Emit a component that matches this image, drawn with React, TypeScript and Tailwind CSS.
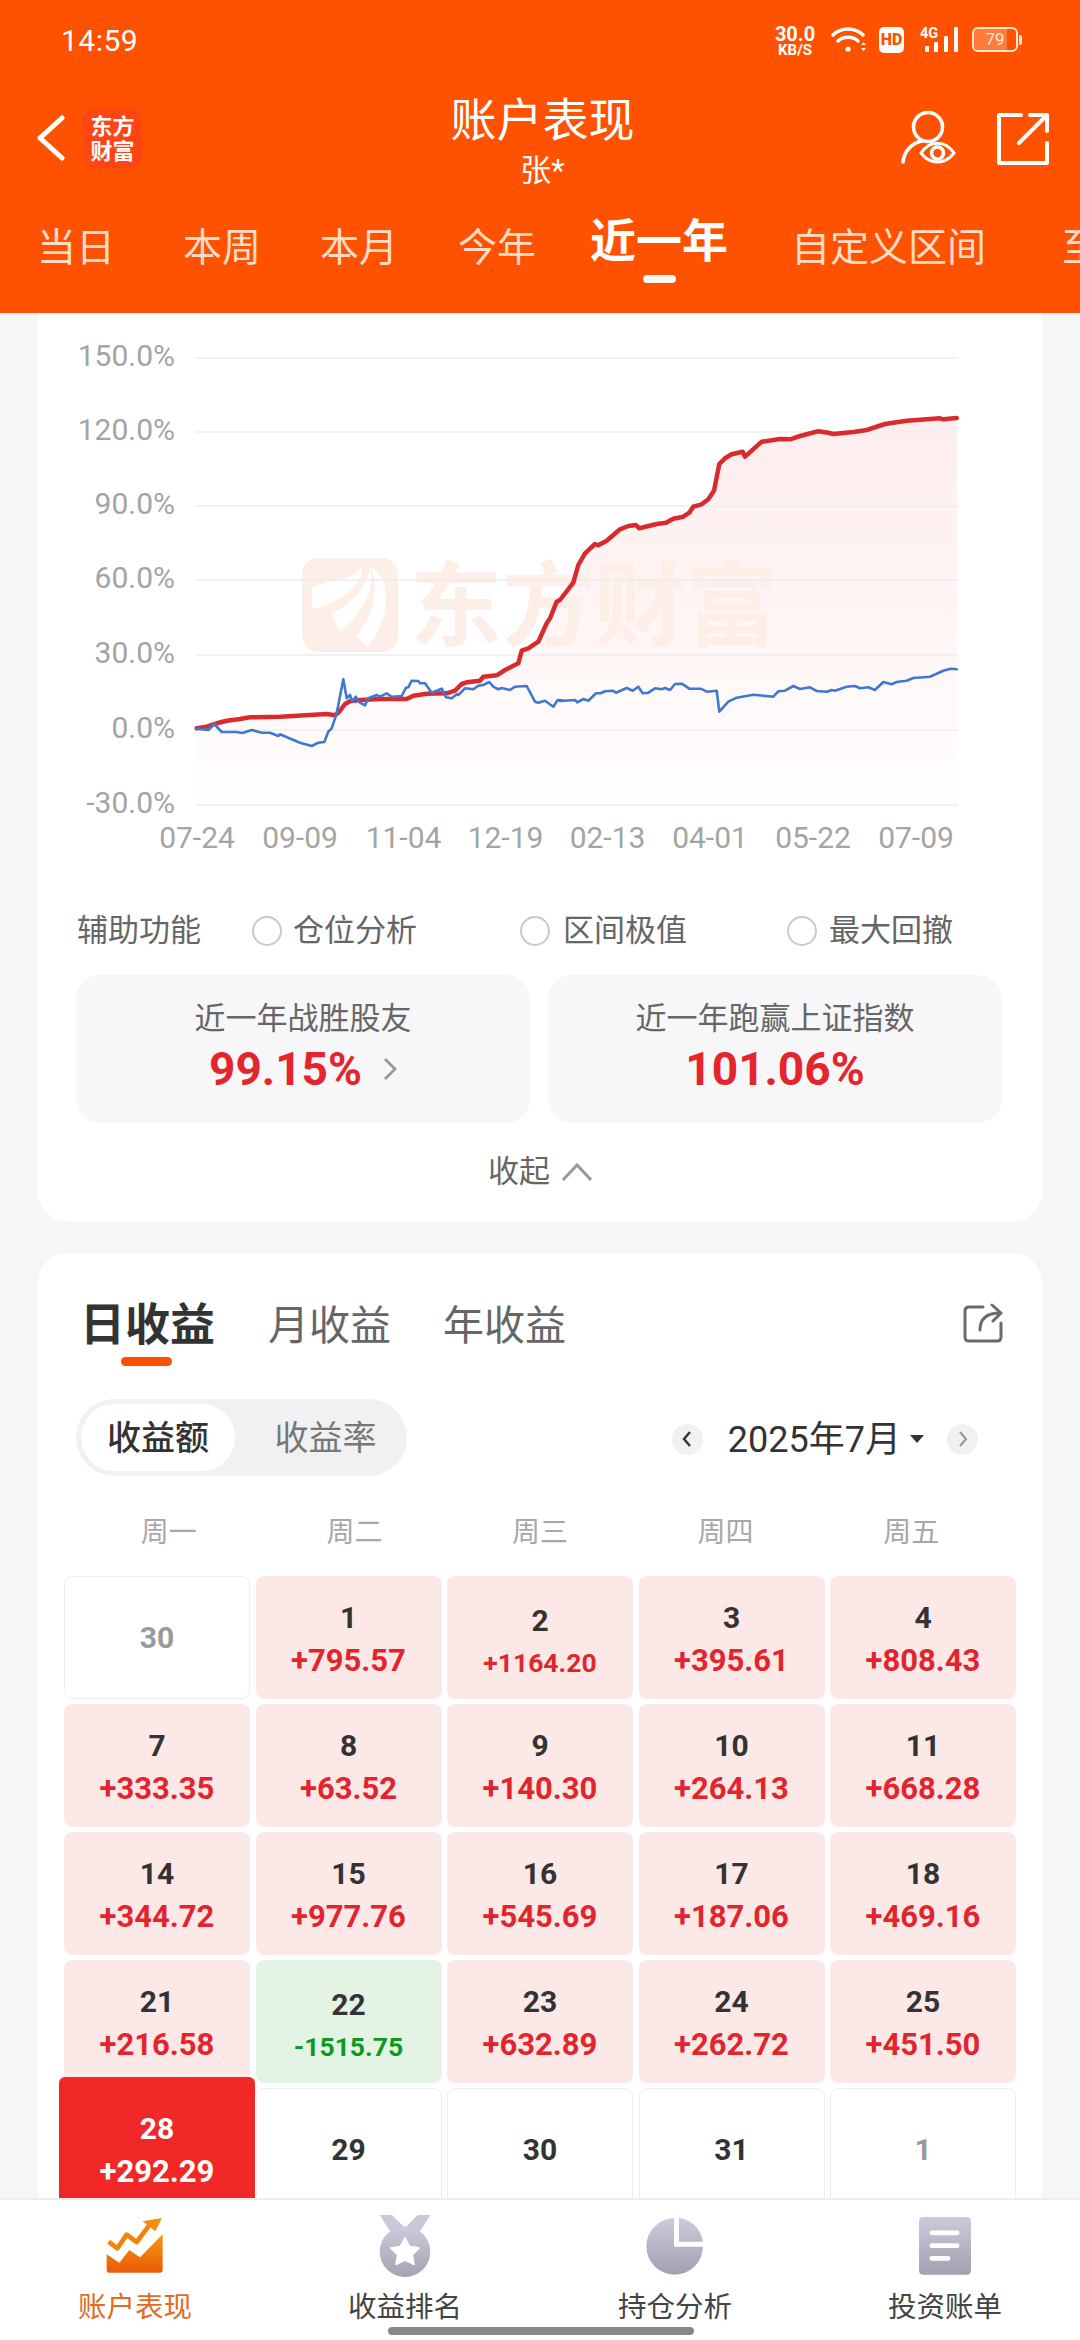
import React from "react";

const z6 = (p: number[][]) => p.map(([x, y]) => [180 + x / 3, 400 + y / 3]);
const z7 = (p: number[][]) => p.map(([x, y]) => [560 + x / 3, 400 + y / 3]);

const redPts = [
  ...z6([[50,985],[80,980],[110,970],[140,962],[180,957],[210,952],[300,950],[440,942],[465,946],[478,935],[495,912],[510,904],[540,900],[600,897],[680,897],[700,887],[740,881],[800,880],[825,872],[845,852],[860,847],[900,842],[910,830],[950,826],[975,810],[1015,790],[1025,752],[1045,745],[1075,725],[1100,670],[1110,655],[1130,605]]),
  ...z7([[0,600],[40,548],[55,495],[75,460],[105,432],[115,436],[140,422],[180,388],[205,378],[228,375],[238,385],[290,372],[318,368],[340,356],[370,350],[388,338],[400,320],[425,313],[445,298],[462,272],[478,192],[495,175],[515,163],[548,155],[555,170],[605,125],[660,117],[690,118],[720,108],[775,94],[805,98],[820,102],[880,96],[920,90],[975,72],[1040,62],[1140,55],[1150,58],[1190,54]]),
];
const bluePts = [
  ...z6([[50,986],[85,990],[103,972],[125,996],[170,996],[187,999],[215,990],[245,998],[270,998],[295,1008],[300,1003],[335,1018],[360,1028],[395,1038],[415,1028],[433,1026],[445,995],[455,985],[470,940],[490,838],[500,895],[510,885],[517,905],[527,890],[540,908],[555,916],[565,895],[590,885],[600,890],[620,880],[635,890],[665,888],[678,863],[685,862],[695,842],[715,843],[720,850],[735,850],[755,878],[785,866],[798,892],[815,895],[830,883],[835,885],[855,865],[880,868],[895,857],[910,855],[928,846],[940,860],[955,868],[965,864],[990,870],[1005,860],[1040,858],[1065,905],[1075,908],[1095,902],[1120,920],[1133,900],[1155,902]]),
  ...z7([[0,903],[45,900],[52,907],[70,897],[85,902],[108,880],[122,880],[135,874],[160,872],[168,878],[200,864],[218,872],[235,860],[248,880],[265,878],[285,865],[305,868],[315,864],[330,870],[345,852],[365,851],[388,866],[422,866],[440,875],[470,872],[478,935],[505,905],[530,893],[580,884],[640,890],[655,874],[675,872],[700,858],[720,867],[750,862],[770,873],[800,875],[815,870],[825,872],[860,860],[885,858],[900,865],[925,862],[945,870],[970,846],[995,853],[1010,846],[1040,842],[1060,834],[1110,830],[1150,812],[1172,806],[1190,808]]),
];
const toD = (p: number[][]) => "M" + p.map(([x, y]) => `${x.toFixed(1)} ${y.toFixed(1)}`).join("L");
const redD = toD(redPts);
const blueD = toD(bluePts);
const areaD = redD + "L957 805L196 805Z";

const yLabels = [
  ["150.0%", 358], ["120.0%", 432], ["90.0%", 506], ["60.0%", 580], ["30.0%", 655], ["0.0%", 730], ["-30.0%", 805],
] as [string, number][];
const xLabels = [
  ["07-24", 197], ["09-09", 300], ["11-04", 403.5], ["12-19", 505.5], ["02-13", 607.5], ["04-01", 710], ["05-22", 813], ["07-09", 916],
] as [string, number][];

function Chart() {
  return (
    <svg width="1004" height="547" viewBox="38 313 1004 547" className="block">
      <defs>
        <linearGradient id="area" gradientUnits="userSpaceOnUse" x1="0" y1="410" x2="0" y2="805">
          <stop offset="0" stopColor="#feeded" />
          <stop offset="0.5" stopColor="#fff5f4" />
          <stop offset="0.85" stopColor="#fffbfb" />
          <stop offset="1" stopColor="#fffefe" />
        </linearGradient>
      </defs>
      <path d={areaD} fill="url(#area)" />
      <rect x="302" y="558" width="96" height="94" rx="16" fill="#fdeee8" />
      <path d="M312 588C330 578 352 582 362 567C364 585 340 603 312 609Z" fill="#fff" />
      <path d="M332 613C348 605 366 592 370 567C376 590 362 614 339 632Z" fill="#fff" />
      <path d="M356 636C370 622 380 595 371 567C392 580 392 615 368 647Z" fill="#fff" />
      <text x="410" y="639" fontSize="92" fontWeight="700" fill="#fdeee8">东方财富</text>
      {yLabels.map(([t, y]) => (
        <g key={t}>
          <line x1="196" x2="958" y1={y} y2={y} stroke="#ecedf1" strokeWidth="1.5" />
          <text x="175" y={y + 8} textAnchor="end" fontSize="30" fill="#a4a4a4">{t}</text>
        </g>
      ))}
      {xLabels.map(([t, x]) => (
        <text key={t} x={x} y="848" textAnchor="middle" fontSize="30" fill="#a4a4a4">{t}</text>
      ))}
      <path d={redD} fill="none" stroke="#d92b2e" strokeWidth="4.5" strokeLinejoin="round" strokeLinecap="round" />
      <path d={blueD} fill="none" stroke="#3f79cf" strokeWidth="2.6" strokeLinejoin="round" strokeLinecap="round" />
    </svg>
  );
}

function StatusBar() {
  return (
    <div className="flex h-[80px] items-start justify-between text-white">
      <div className="ml-[61px] mt-[21px] text-[30px] leading-[40px] tracking-[0.5px]">14:59</div>
      <div className="mr-[58px] mt-[27px] flex items-start">
        <div className="flex w-[44px] flex-col items-center">
          <div className="text-[20px] font-bold leading-[15px]">30.0</div>
          <div className="mt-[3px] text-[15px] font-bold leading-[11px]">KB/S</div>
        </div>
        <svg width="36" height="26" viewBox="0 0 36 26" className="ml-[14px]" fill="none" stroke="#fff" strokeLinecap="round">
          <path d="M2 8C10 0 24 0 32 8" strokeWidth="3.4" />
          <path d="M7 14C12 9 22 9 27 14" strokeWidth="3.4" />
          <circle cx="17" cy="22" r="2.6" fill="#fff" stroke="none" />
          <path d="M30 18l2.5-3 2.5 3zM30 21l2.5 3 2.5-3z" fill="#fff" stroke="none" />
        </svg>
        <div className="ml-[12px] flex h-[26px] w-[25px] items-center justify-center rounded-[5px] bg-white text-[16px] font-black leading-none text-[#ff5000]">HD</div>
        <svg width="38" height="26" viewBox="0 0 38 26" className="ml-[16px]" fill="#fff">
          <rect x="5" y="19" width="4" height="6" rx="1" />
          <rect x="14" y="15" width="4" height="10" rx="1" />
          <rect x="24" y="9" width="4" height="16" rx="1" />
          <rect x="34" y="0" width="4" height="25" rx="1" />
        </svg>
        <div className="ml-[-38px] h-[14px] w-[20px] text-[14.5px] font-bold leading-[14px]">4G</div>
        <div className="ml-[32px] flex items-center">
          <div className="relative flex h-[25px] w-[46px] items-center justify-center overflow-hidden rounded-[6px] border-2 border-[#ffe6d6] text-[17px] leading-none text-[#ffe6d6]">
            <div className="absolute inset-y-0 left-0 w-[78%] bg-[#ff7a3d]" />
            <span className="relative">79</span>
          </div>
          <div className="ml-[1px] h-[10px] w-[3px] rounded-r-[2px] bg-[#ffe6d6]" />
        </div>
      </div>
    </div>
  );
}

function TitleBar() {
  return (
    <div className="mt-[14px] grid grid-cols-[1fr_auto_1fr] items-start text-white">
      <div className="flex items-start">
        <svg width="32" height="48" viewBox="0 0 32 48" className="ml-[35px] mt-[21px]" fill="none" stroke="#fff" strokeWidth="5" strokeLinecap="round" strokeLinejoin="round">
          <path d="M27 3L5 23L27 43" />
        </svg>
        <div className="ml-[16px] mt-[14px] flex h-[60px] w-[59px] items-center justify-center rounded-[13px] bg-[#ff4514] pt-[2px] text-center text-[22px] font-bold leading-[25px]">
          东方<br />财富
        </div>
      </div>
      <div className="flex flex-col items-center pl-[5px]">
        <div className="mt-[1px] text-[46px] leading-[50px]">账户表现</div>
        <div className="mt-[8px] text-[31px] leading-[36px]">张*</div>
      </div>
      <div className="flex items-start justify-end">
        <svg width="60" height="56" viewBox="0 0 60 56" className="mt-[16px]" fill="none" stroke="#fff" strokeWidth="3.6" strokeLinecap="round">
          <circle cx="28" cy="17" r="14.5" />
          <path d="M3 52C4 42 11 33 22 31" />
          <path d="M21 43C30 30 45 30 54 43C45 55 30 55 21 43Z" strokeWidth="3" />
          <circle cx="37.5" cy="43" r="6" strokeWidth="3.6" />
        </svg>
        <svg width="54" height="54" viewBox="0 0 54 54" className="ml-[36px] mr-[30px] mt-[18px]" fill="none" stroke="#fff" strokeWidth="4" strokeLinecap="round" strokeLinejoin="round">
          <path d="M25 3H3V51H51V31" />
          <path d="M23 31L51 3M34 3H51V19" />
        </svg>
      </div>
    </div>
  );
}

function Tabs() {
  return (
    <div className="mt-[25px] flex items-start overflow-hidden whitespace-nowrap pl-[37px] pt-[4px] text-[39px] leading-[46px] text-[#ffdcc8]">
      <div className="mt-[7px] shrink-0">当日</div>
      <div className="ml-[68px] mt-[7px] shrink-0">本周</div>
      <div className="ml-[59px] mt-[7px] shrink-0">本月</div>
      <div className="ml-[60px] mt-[7px] shrink-0">今年</div>
      <div className="ml-[54px] flex shrink-0 flex-col items-center">
        <div className="text-[46px] font-bold leading-[46px] text-white">近一年</div>
        <div className="mt-[11px] h-[8px] w-[33px] rounded-full bg-[#fff6ef]" />
      </div>
      <div className="ml-[63px] mt-[7px] shrink-0">自定义区间</div>
      <div className="ml-[76px] mt-[7px] shrink-0">至今</div>
    </div>
  );
}

function Radio({ label, className, gap }: { label: string; className: string; gap: string }) {
  return (
    <div className={`flex items-center ${className}`}>
      <div className="h-[30px] w-[30px] rounded-full border-2 border-[#c9c9c9] bg-white" />
      <div className={`${gap} text-[#666666]`}>{label}</div>
    </div>
  );
}

function ChevronRight() {
  return (
    <svg width="14" height="22" viewBox="0 0 14 22" fill="none" stroke="#999" strokeWidth="2.8">
      <path d="M2 1L12 11L2 21" />
    </svg>
  );
}

function CardOne() {
  return (
    <section className="rounded-b-[30px] bg-white pb-[30px]">
      <Chart />
      <div className="mt-[50px] flex h-[40px] items-center pl-[39px] pt-[2px] text-[31px] leading-[40px]">
        <div className="w-[124px] text-[#666666]">辅助功能</div>
        <Radio label="仓位分析" className="ml-[51px]" gap="ml-[11px]" />
        <Radio label="区间极值" className="ml-[103px]" gap="ml-[13px]" />
        <Radio label="最大回撤" className="ml-[100px]" gap="ml-[12px]" />
      </div>
      <div className="ml-[38px] mt-[25px] flex w-[926px] gap-[18px]">
        <div className="flex h-[148px] w-[454px] flex-col items-center rounded-[24px] bg-[#f7f7f9] pt-[24px]">
          <div className="text-[31px] leading-[40px] text-[#666666]">近一年战胜股友</div>
          <div className="mt-[5px] flex items-center">
            <div className="text-[46px] font-bold leading-[50px] text-[#e4252c]">99.15%</div>
            <div className="ml-[21px]"><ChevronRight /></div>
          </div>
        </div>
        <div className="flex h-[148px] w-[454px] flex-col items-center rounded-[24px] bg-[#f7f7f9] pt-[24px]">
          <div className="text-[31px] leading-[40px] text-[#666666]">近一年跑赢上证指数</div>
          <div className="mt-[5px] text-[46px] font-bold leading-[50px] text-[#e4252c]">101.06%</div>
        </div>
      </div>
      <div className="mt-[29px] flex h-[40px] items-center justify-center">
        <div className="text-[31px] leading-[40px] text-[#666666]">收起</div>
        <svg width="30" height="18" viewBox="0 0 30 18" className="ml-[12px]" fill="none" stroke="#999" strokeWidth="3">
          <path d="M1 17L15 2L29 17" />
        </svg>
      </div>
    </section>
  );
}

type Cell = { d: string; v?: string; tone: "up" | "down" | "plain" | "muted"; small?: boolean; active?: boolean };

const cells: Cell[] = [
  { d: "30", tone: "muted" },
  { d: "1", v: "+795.57", tone: "up" },
  { d: "2", v: "+1164.20", tone: "up", small: true },
  { d: "3", v: "+395.61", tone: "up" },
  { d: "4", v: "+808.43", tone: "up" },
  { d: "7", v: "+333.35", tone: "up" },
  { d: "8", v: "+63.52", tone: "up" },
  { d: "9", v: "+140.30", tone: "up" },
  { d: "10", v: "+264.13", tone: "up" },
  { d: "11", v: "+668.28", tone: "up" },
  { d: "14", v: "+344.72", tone: "up" },
  { d: "15", v: "+977.76", tone: "up" },
  { d: "16", v: "+545.69", tone: "up" },
  { d: "17", v: "+187.06", tone: "up" },
  { d: "18", v: "+469.16", tone: "up" },
  { d: "21", v: "+216.58", tone: "up" },
  { d: "22", v: "-1515.75", tone: "down", small: true },
  { d: "23", v: "+632.89", tone: "up" },
  { d: "24", v: "+262.72", tone: "up" },
  { d: "25", v: "+451.50", tone: "up" },
  { d: "28", v: "+292.29", tone: "up", active: true },
  { d: "29", tone: "plain" },
  { d: "30", tone: "plain" },
  { d: "31", tone: "plain" },
  { d: "1", tone: "muted" },
];

function DayCell({ c }: { c: Cell }) {
  if (c.active) {
    return (
      <div className="relative h-[123px]">
        <div className="absolute -left-[5px] -right-[5px] -top-[11px] z-10 flex h-[150px] flex-col items-center rounded-[6px] bg-[#f22728] pt-[30px] text-white">
          <div className="text-[30px] font-bold leading-[43px]">{c.d}</div>
          <div className="text-[31px] font-bold leading-[43px]">{c.v}</div>
        </div>
      </div>
    );
  }
  const bg =
    c.tone === "up"
      ? "bg-[#fde8e8]"
      : c.tone === "down"
        ? "bg-[#e3f4e4]"
        : "border border-[#eeeeee] bg-white";
  const dc = c.tone === "muted" ? "text-[#999999]" : "text-[#333333]";
  const vc = c.tone === "down" ? "text-[#0a9a1e]" : "text-[#e0262c]";
  const pad = c.small ? "pt-[6px]" : c.v ? "pt-[3px]" : "";
  return (
    <div className={`flex h-[123px] flex-col items-center justify-center rounded-[8px] ${bg} ${pad}`}>
      <div className={`text-[30px] font-bold leading-[43px] ${dc}`}>{c.d}</div>
      {c.v ? (
        <div className={`font-bold ${c.small ? "text-[26.5px] leading-[41px]" : "text-[31px] leading-[43px]"} ${vc}`}>{c.v}</div>
      ) : null}
    </div>
  );
}

function CardTwo() {
  return (
    <section className="mt-[31px] rounded-t-[30px] bg-white pt-[50px]">
      <div className="flex items-start justify-between pl-[42px] pr-[39px]">
        <div className="flex items-start">
          <div className="flex flex-col items-center">
            <div className="text-[45px] font-bold leading-[46px] text-[#333333]">日收益</div>
            <div className="mr-[3px] mt-[8px] h-[9px] w-[51px] rounded-full bg-[#ff5000]" />
          </div>
          <div className="ml-[53px] text-[41px] leading-[46px] text-[#666666]">月收益</div>
          <div className="ml-[52px] text-[41px] leading-[46px] text-[#666666]">年收益</div>
        </div>
        <svg width="40" height="40" viewBox="0 0 40 40" fill="none" stroke="#6b6b6b" strokeWidth="3" strokeLinecap="round" strokeLinejoin="round">
          <path d="M20 4H6Q2 4 2 8V34Q2 38 6 38H34Q38 38 38 34V20" />
          <path d="M17 27C17 17 22 10 37 10M29 2L38 10L30 18" />
        </svg>
      </div>
      <div className="mt-[33px] flex items-center justify-between pl-[38px] pr-[64px]">
        <div className="flex h-[77px] w-[331px] items-center rounded-full bg-[#f1f1f4] p-[5px]">
          <div className="flex h-[67px] w-[154px] items-center justify-center rounded-full bg-white pt-[2px] text-[34px] font-medium text-[#333333]">收益额</div>
          <div className="flex-1 pl-[14px] pt-[2px] text-center text-[34px] text-[#777777]">收益率</div>
        </div>
        <div className="mt-[3px] flex items-center">
          <div className="flex h-[31px] w-[31px] items-center justify-center rounded-full bg-[#f1f1f4]">
            <svg width="10" height="16" viewBox="0 0 10 16" fill="none" stroke="#333" strokeWidth="2.4"><path d="M8 1L2 8L8 15" /></svg>
          </div>
          <div className="ml-[25px] mt-[2px] text-[36px] leading-[44px] text-[#333333]">2025年7月</div>
          <div className="ml-[9px] h-0 w-0 border-x-[7.5px] border-t-[8px] border-x-transparent border-t-[#333333]" />
          <div className="ml-[23px] flex h-[31px] w-[31px] items-center justify-center rounded-full bg-[#f1f1f4]">
            <svg width="10" height="16" viewBox="0 0 10 16" fill="none" stroke="#999" strokeWidth="2.2"><path d="M2 1L8 8L2 15" /></svg>
          </div>
        </div>
      </div>
      <div className="ml-[38px] mt-[37px] grid w-[928px] grid-cols-5 text-center text-[28px] leading-[40px] text-[#a8a8a8]">
        <div>周一</div>
        <div>周二</div>
        <div>周三</div>
        <div>周四</div>
        <div>周五</div>
      </div>
      <div className="ml-[26px] mt-[23px] grid w-[952px] grid-cols-5 gap-x-[5.5px] gap-y-[5px]">
        {cells.map((c, i) => (
          <DayCell key={i} c={c} />
        ))}
      </div>
    </section>
  );
}

function NavIconOne() {
  return (
    <svg width="60" height="60" viewBox="45 30 180 180">
      <defs>
        <linearGradient id="nav1" x1="0" y1="0" x2="0" y2="1">
          <stop offset="0" stopColor="#f79a0e" />
          <stop offset="1" stopColor="#e95a08" />
        </linearGradient>
      </defs>
      <path d="M50 145L88 170L118 132L150 154L218 85V193Q218 200 211 200H57Q50 200 50 193Z" fill="url(#nav1)" />
      <path d="M56 107L82 127L110 86L140 108L182 52" fill="none" stroke="#f4820c" strokeWidth="14" strokeLinejoin="round" />
      <path d="M216 36L158 46L196 76Z" fill="#f58c0c" />
    </svg>
  );
}

function NavIconTwo() {
  return (
    <svg width="54" height="64" viewBox="867 25 160 190">
      <defs>
        <linearGradient id="nav2" x1="0" y1="0" x2="0" y2="1">
          <stop offset="0" stopColor="#cbcbdb" />
          <stop offset="1" stopColor="#a3a3b4" />
        </linearGradient>
      </defs>
      <path d="M872 28H908L947 66L985 28H1022L992 76H902Z" fill="#c8c8da" />
      <circle cx="947" cy="137" r="75" fill="url(#nav2)" />
      <path d="M947 97L960 122L988 126L968 146L973 174L947 161L921 174L926 146L906 126L934 122Z" fill="#fff" stroke="#fff" strokeWidth="6" strokeLinejoin="round" />
    </svg>
  );
}

function NavIconThree() {
  return (
    <svg width="60" height="60" viewBox="45 30 180 180">
      <defs>
        <linearGradient id="nav3" gradientUnits="userSpaceOnUse" x1="0" y1="35" x2="0" y2="207">
          <stop offset="0" stopColor="#cbcbdb" />
          <stop offset="1" stopColor="#a0a0b1" />
        </linearGradient>
      </defs>
      <path d="M132 36A85 85 0 1 0 219 122H132Z" fill="url(#nav3)" />
      <path d="M147 35A85 85 0 0 1 219 107H147Z" fill="url(#nav3)" />
    </svg>
  );
}

function NavIconFour() {
  return (
    <svg width="52" height="58" viewBox="868 35 154 172">
      <defs>
        <linearGradient id="nav4" x1="0" y1="0" x2="0" y2="1">
          <stop offset="0" stopColor="#cbcbdb" />
          <stop offset="1" stopColor="#a0a0b1" />
        </linearGradient>
      </defs>
      <rect x="868" y="35" width="154" height="171" rx="12" fill="url(#nav4)" />
      <path d="M906 82H981M906 120H981M906 158H954" stroke="#fff" strokeWidth="14" strokeLinecap="round" />
    </svg>
  );
}

function NavItem({ label, active, children }: { label: string; active?: boolean; children: React.ReactNode }) {
  return (
    <div className="flex flex-col items-center">
      <div className="flex h-[65px] items-center justify-center">{children}</div>
      <div className={`mt-[10px] text-[28.5px] leading-[40px] ${active ? "text-[#e5691f]" : "text-[#444444]"}`}>{label}</div>
    </div>
  );
}

function BottomNav() {
  return (
    <nav className="relative z-20 grid h-[142px] shrink-0 grid-cols-4 border-t-2 border-[#eeeeee] bg-white pt-[13px]">
      <NavItem label="账户表现" active><NavIconOne /></NavItem>
      <NavItem label="收益排名"><NavIconTwo /></NavItem>
      <NavItem label="持仓分析"><NavIconThree /></NavItem>
      <NavItem label="投资账单"><NavIconFour /></NavItem>
      <div className="absolute bottom-[5px] left-[388px] h-[8px] w-[306px] rounded-full bg-[#888888]" />
    </nav>
  );
}

export default function App() {
  return (
    <div className="flex h-[2340px] w-[1080px] flex-col overflow-hidden bg-[#f5f6f8] font-[Roboto,'Noto_Sans_CJK_SC',sans-serif]">
      <header className="h-[313px] shrink-0 bg-[#ff5200]">
        <StatusBar />
        <TitleBar />
        <Tabs />
      </header>
      <main className="min-h-0 flex-1 overflow-hidden px-[38px]">
        <CardOne />
        <CardTwo />
      </main>
      <BottomNav />
    </div>
  );
}
